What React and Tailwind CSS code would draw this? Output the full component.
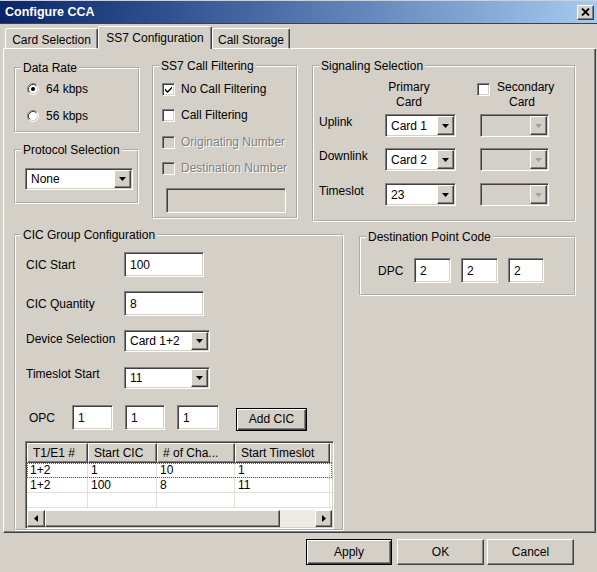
const SUNKEN =
  'border border-t-[#808080] border-l-[#808080] border-r-white border-b-white shadow-[inset_1px_1px_0_#404040,inset_-1px_-1px_0_#d4d0c8]';
const RAISED =
  'border border-t-white border-l-white border-r-[#404040] border-b-[#404040] shadow-[inset_-1px_-1px_0_#808080,inset_1px_1px_0_#d4d0c8]';
const DEFAULT_BTN =
  'border border-black shadow-[inset_1px_1px_0_#fff,inset_-1px_-1px_0_#404040,inset_-2px_-2px_0_#808080]';

function Group({ title, className = '', children }) {
  return (
    <fieldset className={`shrink-0 border-2 border-white [border-style:groove] ${className}`}>
      <legend className="ml-[5px] px-[2px] h-[14px] leading-[14px]">{title}</legend>
      {children}
    </fieldset>
  );
}

function Arrow({ dir = 'down', color = '#000' }) {
  if (dir === 'left')
    return (
      <svg width="4" height="7" viewBox="0 0 4 7">
        <path d="M4 0V7L0 3.5Z" fill={color} />
      </svg>
    );
  if (dir === 'right')
    return (
      <svg width="4" height="7" viewBox="0 0 4 7">
        <path d="M0 0V7L4 3.5Z" fill={color} />
      </svg>
    );
  return (
    <svg width="7" height="4" viewBox="0 0 7 4">
      <path d="M0 0H7L3.5 4Z" fill={color} />
    </svg>
  );
}

function TextBox({ value = '', className = '', disabled }) {
  return (
    <div className={`${SUNKEN} ${disabled ? 'bg-[#d4d0c8]' : 'bg-white'} flex items-center pl-[5px] ${className}`}>
      {value}
    </div>
  );
}

function Combo({ value = '', className = '', disabled }) {
  return (
    <div className={`${SUNKEN} ${disabled ? 'bg-[#d4d0c8]' : 'bg-white'} flex p-px ${className}`}>
      <div className="flex-1 flex items-center pl-[4px]">{value}</div>
      <div className={`${RAISED} w-[17px] bg-[#d4d0c8] flex items-center justify-center`}>
        <Arrow color={disabled ? '#a0a0a0' : '#000'} />
      </div>
    </div>
  );
}

function Check({ label, checked, disabled }) {
  return (
    <div className="h-[16px] flex items-center gap-[6px]">
      <span
        className={`${SUNKEN} w-[13px] h-[13px] shrink-0 flex items-center justify-center ${
          disabled ? 'bg-[#d4d0c8]' : 'bg-white'
        }`}
      >
        {checked && (
          <svg width="7" height="7" viewBox="0 0 7 7">
            <polygon points="0,2.5 2.5,5 7,0.5 7,2.5 2.5,7 0,4.5" fill="#000" />
          </svg>
        )}
      </span>
      {label && (
        <span className={disabled ? 'text-[#808080] [text-shadow:1px_1px_0_#fff]' : ''}>{label}</span>
      )}
    </div>
  );
}

function Radio({ label, checked }) {
  return (
    <div className="h-[16px] flex items-center gap-[7px]">
      <svg width="12" height="12" viewBox="0 0 12 12" className="shrink-0">
        <circle cx="6" cy="6" r="4.5" fill="#fff" />
        <path d="M2.11 9.89A5.5 5.5 0 0 1 9.89 2.11" fill="none" stroke="#808080" />
        <path d="M9.89 2.11A5.5 5.5 0 0 1 2.11 9.89" fill="none" stroke="#fff" />
        <path d="M2.82 9.18A4.5 4.5 0 0 1 9.18 2.82" fill="none" stroke="#404040" />
        <path d="M9.18 2.82A4.5 4.5 0 0 1 2.82 9.18" fill="none" stroke="#d4d0c8" />
        {checked && <circle cx="6" cy="6" r="2" fill="#000" />}
      </svg>
      <span>{label}</span>
    </div>
  );
}

function Button({ children, className = '', isDefault }) {
  return (
    <div className={`${isDefault ? DEFAULT_BTN : RAISED} bg-[#d4d0c8] flex items-center justify-center ${className}`}>
      {children}
    </div>
  );
}

const COLS = [
  { label: 'T1/E1 #', w: 'w-[61px]' },
  { label: 'Start CIC', w: 'w-[69px]' },
  { label: '# of Cha...', w: 'w-[78px]' },
  { label: 'Start Timeslot', w: 'w-[95px]' },
];

const ROWS = [
  ['1+2', '1', '10', '1'],
  ['1+2', '100', '8', '11'],
  ['', '', '', ''],
];

function ListView() {
  return (
    <div className={`${SUNKEN} bg-white p-px w-[309px] h-[88px] ml-[-1px] mt-[11px] flex flex-col overflow-hidden`}>
      <div className="flex h-[20px] shrink-0">
        {COLS.map((c) => (
          <div
            key={c.label}
            className={`${c.w} shrink-0 border border-t-white border-l-white border-r-[#404040] border-b-[#404040] shadow-[inset_-1px_-1px_0_#808080] bg-[#d4d0c8] flex items-center pl-[5px]`}
          >
            {c.label}
          </div>
        ))}
        <div className="flex-1 border border-t-white border-l-white border-b-[#404040] border-r-[#d4d0c8] bg-[#d4d0c8]" />
      </div>
      <div className="flex-1 flex flex-col">
        {ROWS.map((r, i) => (
          <div
            key={i}
            className={`flex h-[15px] shrink-0 ${i === 0 ? 'outline-1 outline-dotted outline-[#606060] -outline-offset-1' : ''}`}
          >
            {r.map((v, j) => (
              <div
                key={j}
                className={`${COLS[j].w} shrink-0 border-r border-b border-[#e2e0da] pl-[3px] leading-[14px]`}
              >
                {v}
              </div>
            ))}
            <div className="flex-1 border-b border-[#e2e0da]" />
          </div>
        ))}
      </div>
      {/* horizontal scrollbar */}
      <div className="flex h-[17px] shrink-0">
        <div className={`${RAISED} w-[18px] bg-[#d4d0c8] flex items-center justify-center`}>
          <Arrow dir="left" />
        </div>
        <div className={`${RAISED} w-[235px] bg-[#d4d0c8]`} />
        <div className="flex-1 bg-[#ecebe6]" />
        <div className={`${RAISED} w-[17px] bg-[#d4d0c8] flex items-center justify-center`}>
          <Arrow dir="right" />
        </div>
      </div>
    </div>
  );
}

function Tab({ label, selected, className = '' }) {
  if (selected)
    return (
      <div
        className={`h-[23px] border-t border-l border-r border-t-white border-l-white border-r-[#404040] shadow-[inset_-1px_0_0_#808080] rounded-t-[2px] flex items-center justify-center ${className}`}
      >
        {label}
      </div>
    );
  return (
    <div
      className={`h-[21px] border border-t-white border-l-white border-r-[#404040] border-b-white shadow-[inset_-1px_0_0_#808080] rounded-t-[2px] flex items-center justify-center pt-[3px] ${className}`}
    >
      {label}
    </div>
  );
}

function FormRow({ label, children, className = '', labelClass = '' }) {
  return (
    <div className={`flex ${className}`}>
      <div className={`w-[98px] shrink-0 ${labelClass}`}>{label}</div>
      {children}
    </div>
  );
}

export default function App() {
  return (
    <div className="w-[597px] h-[572px] bg-[#d4d0c8] font-['Liberation_Sans',Arial,sans-serif] text-[12px] leading-[14px] text-black flex flex-col overflow-hidden select-none">
      {/* Title bar */}
      <div className="h-[25px] pt-px shrink-0">
        <div className="h-[22px] bg-linear-to-r from-[#0a246a] to-[#a6caf0] flex items-center justify-between pl-[5px] pr-[3px]">
          <span className="text-white font-bold text-[12.5px]">Configure CCA</span>
          <div className={`${RAISED} w-[17px] h-[15px] bg-[#d4d0c8] flex items-center justify-center`}>
            <svg width="9" height="8" viewBox="0 0 9 8">
              <path d="M1 0.5L8 7.5M8 0.5L1 7.5" stroke="#000" strokeWidth="1.8" />
            </svg>
          </div>
        </div>
        <div className="h-px bg-[#404040]" />
      </div>

      {/* Tabs */}
      <div className="ml-[3px] w-[593px] h-[24px] flex items-end shrink-0">
        <div className="w-[2px] h-px bg-white" />
        <Tab label="Card Selection" className="w-[93px]" />
        <Tab label="SS7 Configuration" selected className="w-[114px]" />
        <Tab label="Call Storage" className="w-[78px]" />
        <div className="flex-1 h-px bg-white" />
      </div>

      {/* Tab panel */}
      <div className="ml-[3px] w-[593px] h-[484px] shrink-0 border-l border-r border-b border-l-white border-r-[#404040] border-b-[#404040] shadow-[inset_-1px_-1px_0_#808080] flex flex-col">
        {/* upper groups */}
        <div className="flex items-start pl-[10px]">
          <div className="w-[126px] mt-[12px] flex flex-col">
            <Group title="Data Rate" className="w-[126px] h-[72px]">
              <div className="pt-[6px] pl-[11px]">
                <Radio label="64 kbps" checked />
                <div className="mt-[11px]">
                  <Radio label="56 kbps" />
                </div>
              </div>
            </Group>
            <Group title="Protocol Selection" className="w-[125px] h-[61px] mt-[10px]">
              <div className="pt-[11px] pl-[9px]">
                <Combo value="None" className="w-[108px] h-[22px]" />
              </div>
            </Group>
          </div>

          <Group title="SS7 Call Filtering" className="ml-[12px] mt-[10px] w-[146px] h-[160px]">
            <div className="pl-[8px] flex flex-col">
              <div className="mt-[8px]">
                <Check label="No Call Filtering" checked />
              </div>
              <div className="mt-[10px]">
                <Check label="Call Filtering" />
              </div>
              <div className="mt-[11px]">
                <Check label="Originating Number" disabled />
              </div>
              <div className="mt-[10px]">
                <Check label="Destination Number" disabled />
              </div>
              <TextBox disabled className="mt-[12px] ml-[4px] w-[120px] h-[25px]" />
            </div>
          </Group>

          <Group title="Signaling Selection" className="ml-[14px] mt-[10px] w-[264px] h-[163px]">
            <div className="pl-[5px] flex flex-col">
              <div className="mt-[7px] h-[30px] flex leading-[15px]">
                <div className="ml-[60px] w-[60px] text-center">
                  Primary
                  <br />
                  Card
                </div>
                <div className="ml-[38px] mt-px">
                  <Check />
                </div>
                <div className="ml-[7px]">
                  <div>Secondary</div>
                  <div className="pl-[12px]">Card</div>
                </div>
              </div>
              {[
                ['Uplink', 'Card 1', 'mt-[4px]'],
                ['Downlink', 'Card 2', 'mt-[11px]'],
                ['Timeslot', '23', 'mt-[12px]'],
              ].map(([l, v, m]) => (
                <div key={l} className={`flex items-start h-[23px] ${m}`}>
                  <div className="w-[66px] pt-px">{l}</div>
                  <Combo value={v} className="w-[71px] h-[23px]" />
                  <Combo disabled className="ml-[24px] w-[69px] h-[23px]" />
                </div>
              ))}
            </div>
          </Group>
        </div>

        {/* lower groups */}
        <div className="flex items-start pl-[10px] mt-[6px]">
          <Group title="CIC Group Configuration" className="w-[330px] h-[303px]">
            <div className="pl-[10px] flex flex-col">
              <FormRow label="CIC Start" className="mt-[10px] h-[25px] items-center">
                <TextBox value="100" className="w-[80px] h-[25px]" />
              </FormRow>
              <FormRow label="CIC Quantity" className="mt-[14px] h-[25px] items-center">
                <TextBox value="8" className="w-[80px] h-[25px]" />
              </FormRow>
              <FormRow label="Device Selection" className="mt-[14px] h-[22px] items-start" labelClass="pt-[2px]">
                <Combo value="Card 1+2" className="w-[86px] h-[22px]" />
              </FormRow>
              <FormRow label="Timeslot Start" className="mt-[15px] h-[22px] items-start">
                <Combo value="11" className="w-[86px] h-[22px]" />
              </FormRow>
              <div className="mt-[16px] h-[25px] flex items-center">
                <div className="ml-[3px] w-[43px]">OPC</div>
                <TextBox value="1" className="w-[41px] h-[25px]" />
                <TextBox value="1" className="ml-[12px] w-[40px] h-[25px]" />
                <TextBox value="1" className="ml-[12px] w-[42px] h-[25px]" />
                <Button isDefault className="ml-[17px] w-[71px] h-[23px] mt-[3px]">
                  Add CIC
                </Button>
              </div>
              <ListView />
            </div>
          </Group>

          <Group title="Destination Point Code" className="ml-[15px] mt-[2px] w-[217px] h-[66px]">
            <div className="pt-[14px] pl-[17px] flex items-center h-[39px]">
              <div className="w-[36px]">DPC</div>
              <TextBox value="2" className="w-[37px] h-[25px]" />
              <TextBox value="2" className="ml-[10px] w-[37px] h-[25px]" />
              <TextBox value="2" className="ml-[10px] w-[36px] h-[25px]" />
            </div>
          </Group>
        </div>
      </div>

      {/* Dialog buttons */}
      <div className="mt-[6px] flex justify-end pr-[23px]">
        <Button isDefault className="w-[86px] h-[26px]">
          Apply
        </Button>
        <Button className="ml-[5px] w-[87px] h-[26px]">OK</Button>
        <Button className="ml-[3px] w-[87px] h-[26px]">Cancel</Button>
      </div>
    </div>
  );
}
